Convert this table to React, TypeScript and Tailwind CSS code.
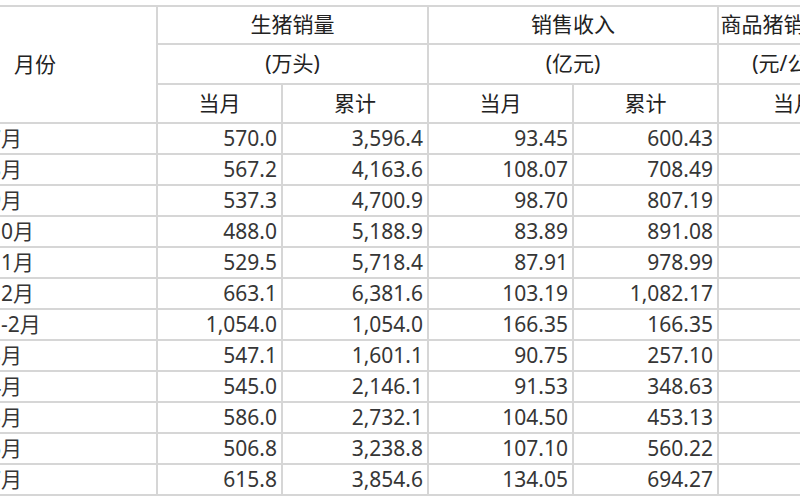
const rows: [string, string, string, string, string][] = [
  ["7月", "570.0", "3,596.4", "93.45", "600.43"],
  ["8月", "567.2", "4,163.6", "108.07", "708.49"],
  ["9月", "537.3", "4,700.9", "98.70", "807.19"],
  ["10月", "488.0", "5,188.9", "83.89", "891.08"],
  ["11月", "529.5", "5,718.4", "87.91", "978.99"],
  ["12月", "663.1", "6,381.6", "103.19", "1,082.17"],
  ["1-2月", "1,054.0", "1,054.0", "166.35", "166.35"],
  ["3月", "547.1", "1,601.1", "90.75", "257.10"],
  ["4月", "545.0", "2,146.1", "91.53", "348.63"],
  ["5月", "586.0", "2,732.1", "104.50", "453.13"],
  ["6月", "506.8", "3,238.8", "107.10", "560.22"],
  ["7月", "615.8", "3,854.6", "134.05", "694.27"],
]

const head = "bg-white flex items-center justify-center text-[#222]"
const num = "bg-white flex items-center justify-end pr-[4px]"

export default function App() {
  return (
    <div
      className="w-[800px] h-[500px] overflow-hidden bg-white text-[21px] text-[#363636]"
      style={{ fontFamily: '"Noto Sans", "Noto Sans CJK SC", sans-serif' }}
    >
      <div className="mt-[5px] ml-[-18px] w-max grid grid-cols-[174px_123px_144px_143px_143px_150px] grid-rows-[36px_38px_37px_repeat(12,29px)] gap-[2px] bg-[#d6d6d6] py-[2px]">
        <div className="row-span-3 bg-white flex items-center pl-[32px] text-[#222]">月份</div>
        <div className={`${head} col-span-2`}>生猪销量</div>
        <div className={`${head} col-span-2`}>销售收入</div>
        <div className={`${head} whitespace-nowrap`}>商品猪销售均价</div>

        <div className={`${head} col-span-2`}>(万头)</div>
        <div className={`${head} col-span-2`}>(亿元)</div>
        <div className={head}>(元/公斤)</div>

        <div className={head}>当月</div>
        <div className={head}>累计</div>
        <div className={head}>当月</div>
        <div className={head}>累计</div>
        <div className={head}>当月</div>

        {rows.map((r, i) => (
          <div key={i} className="contents">
            <div className="bg-white flex items-center pl-[7px] whitespace-nowrap">{r[0]}</div>
            <div className={num}>{r[1]}</div>
            <div className={num}>{r[2]}</div>
            <div className={num}>{r[3]}</div>
            <div className={num}>{r[4]}</div>
            <div className="bg-white" />
          </div>
        ))}
      </div>
    </div>
  )
}
